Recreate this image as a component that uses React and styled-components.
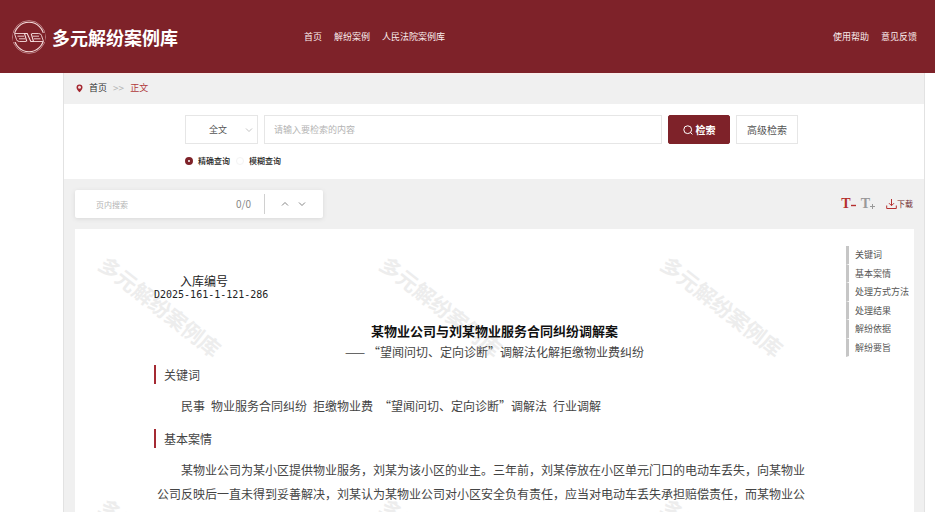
import React, { useState } from 'react';
import styled, { createGlobalStyle } from 'styled-components';

const GlobalStyle = createGlobalStyle`
  * {
    box-sizing: border-box;
  }

  body {
    margin: 0;
    background: #ffffff;
    color: #333333;
    font-family: "Noto Sans CJK SC", sans-serif;
    font-size: 9px;
  }

  button, input, select {
    font-family: inherit;
    margin: 0;
  }

  a {
    color: inherit;
    text-decoration: none;
  }
`;

const Page = styled.div`
  display: flex;
  flex-direction: column;
  min-height: 100vh;
`;

const Header = styled.header`
  display: flex;
  align-items: center;
  height: 73px;
  padding: 0 18px 0 12px;
  background: #7e2229;
  color: #ffffff;
`;

const Brand = styled.a`
  display: flex;
  align-items: center;
  gap: 6px;
  flex: 0 0 292px;
  font-size: 18px;
  font-weight: 700;
  line-height: 26px;
`;

const HeaderLinks = styled.nav`
  display: flex;
  gap: 12px;
  margin-left: ${(props) => (props.$end ? 'auto' : '0')};
  color: #fbeeee;
  font-size: 9px;
  line-height: 14px;
`;

const Shell = styled.main`
  display: flex;
  flex-direction: column;
  flex: 1;
  margin: 0 10px 0 63px;
  border: 1px solid #e2e2e2;
  border-width: 0 1px;
  background: #f0f0f0;
`;

const Breadcrumb = styled.nav`
  display: flex;
  align-items: center;
  gap: 6px;
  height: 31px;
  padding: 0 12px 3px;
  border-top: 2px solid #f8eeec;
  font-size: 9px;
  line-height: 14px;
`;

const Arrows = styled.span`
  color: #b5b5b5;
  font-size: 10px;
`;

const Current = styled.span`
  color: #b0393b;
`;

const SearchPanel = styled.form`
  height: 75px;
  padding: 11px 126px 0 121px;
  background: #ffffff;
`;

const SearchRow = styled.div`
  display: flex;
  gap: 6px;
  height: 29px;
`;

const SelectBox = styled.div`
  position: relative;
  flex: 0 0 73px;

  svg {
    position: absolute;
    top: 11px;
    right: 5px;
    pointer-events: none;
  }
`;

const Select = styled.select`
  width: 100%;
  height: 100%;
  padding: 0 0 0 23px;
  border: 1px solid #e6e6e6;
  border-radius: 0;
  background: #ffffff;
  color: #555555;
  font-size: 9px;
  appearance: none;
`;

const SearchInput = styled.input`
  flex: 1;
  min-width: 0;
  padding: 0 9px;
  border: 1px solid #e6e6e6;
  font-size: 9px;

  &::placeholder {
    color: #b4b4b4;
  }
`;

const SearchButton = styled.button`
  display: flex;
  align-items: center;
  justify-content: center;
  gap: 3px;
  width: 62px;
  padding: 0;
  border: 1px solid ${(props) => (props.$primary ? '#7e2229' : '#e6e6e6')};
  border-radius: ${(props) => (props.$primary ? '2px' : '0')};
  background: ${(props) => (props.$primary ? '#7e2229' : '#ffffff')};
  color: ${(props) => (props.$primary ? '#ffffff' : '#555555')};
  font-size: 10px;
  font-weight: ${(props) => (props.$primary ? 700 : 400)};
`;

const RadioRow = styled.div`
  display: flex;
  gap: 6px;
  margin-top: 10px;
`;

const RadioLabel = styled.label`
  display: flex;
  align-items: center;
  gap: 5px;
  color: #222222;
  font-size: 8px;
  font-weight: 500;
  line-height: 14px;
`;

const Radio = styled.input`
  width: 8px;
  height: 8px;
  border: 1px solid #f4f4f4;
  border-radius: 50%;
  background: #ffffff;
  appearance: none;

  &:checked {
    border: 3px solid #7e2229;
  }
`;

const Tools = styled.div`
  display: flex;
  align-items: center;
  justify-content: space-between;
  height: 50px;
  padding: 0 11px;
`;

const FindBox = styled.div`
  display: flex;
  align-items: center;
  width: 248px;
  height: 28px;
  padding: 0 17px 0 21px;
  border-radius: 2px;
  background: #ffffff;
  box-shadow: 0 1px 4px #d8d8d8;
`;

const FindInput = styled.input`
  flex: 1;
  min-width: 0;
  padding: 0;
  border: 0;
  font-size: 8px;

  &::placeholder {
    color: #b4b4b4;
  }
`;

const FindCount = styled.span`
  padding-right: 13px;
  color: #888888;
  font-size: 10px;
  line-height: 14px;
`;

const FindSteps = styled.div`
  display: flex;
  align-items: center;
  gap: 9px;
  height: 20px;
  padding-left: 16px;
  border-left: 1px solid #d0d0d0;
`;

const IconButton = styled.button`
  display: flex;
  align-items: center;
  padding: 0;
  border: 0;
  background: none;
  color: ${(props) => props.$color || '#888888'};
  font-size: 8px;
  line-height: 14px;
`;

const ToolGroup = styled.div`
  display: flex;
  align-items: center;
  gap: 5px;
`;

const Download = styled(IconButton)`
  margin-left: 6px;
`;

const SizeLetter = styled.span`
  font-family: "Liberation Serif", serif;
  font-size: 14px;
  font-weight: 700;
  line-height: 16px;
`;

const Paper = styled.div`
  position: relative;
  flex: 1;
  margin: 0 10px 0 11px;
  overflow: hidden;
  background: #ffffff;
`;

const Watermarks = styled.div`
  position: absolute;
  top: -44px;
  left: -55px;
  display: grid;
  grid-template-columns: repeat(3, 281px);
  grid-auto-rows: 242px;
  place-items: center;
  color: #ededed;
  font-size: 21px;
  font-weight: 700;
  white-space: nowrap;
  pointer-events: none;
  user-select: none;
`;

const Watermark = styled.span`
  transform: rotate(38deg);
`;

const Outline = styled.nav`
  position: absolute;
  top: 17px;
  right: 5px;
  display: grid;
  grid-template-rows: repeat(6, 1fr);
  width: 63px;
  height: 111px;
`;

const OutlineLink = styled.a`
  display: flex;
  align-items: center;
  padding-left: 6px;
  border-left: 3px solid #c6c6c6;
  border-bottom: 1px solid #ffffff;
  color: #555555;
  font-size: 9px;
  white-space: nowrap;
`;

const Article = styled.article`
  position: relative;
  padding: 45px 79px 5px;
  font-size: 12px;
`;

const CaseNumber = styled.div`
  color: #222222;
  line-height: 14px;
`;

const CaseNumberLabel = styled.div`
  padding-left: 26px;
`;

const CaseNumberValue = styled.div`
  font-family: "DejaVu Sans Mono", monospace;
  font-size: 10px;
`;

const Title = styled.h1`
  margin: 19px 0 0;
  color: #111111;
  font-size: 13px;
  font-weight: 700;
  line-height: 20px;
  text-align: center;
`;

const Subtitle = styled.p`
  margin: 0 0 2px;
  color: #444444;
  line-height: 22px;
  text-align: center;
`;

const SectionTitle = styled.h2`
  margin: 0 0 10px;
  padding-left: 8px;
  border-left: 2px solid #a52a33;
  color: #444444;
  font-size: 12px;
  font-weight: 400;
  line-height: 19px;
`;

const Paragraph = styled.p`
  max-width: 54em;
  margin: 0 3px 11px;
  color: #444444;
  line-height: 24px;
  text-indent: 2em;
`;

const Emblem = () => (
  <svg width="34" height="34" viewBox="0 0 34 34" fill="none" stroke="#f6dcdc">
    <circle cx="17" cy="17" r="16.4" strokeWidth="0.5" />
    <circle cx="17" cy="17" r="14.8" strokeWidth="1.1" />
    <path d="M1 13h32v9H1z" fill="#7e2229" stroke="none" />
    <path
      d="M12.500 13.500H2.500L4.500 19.500Q5 21.500 7.500 21.500H14M12 16.200H5.500M13 18.800H7M21.500 21.500h10L29.500 15.500Q29 13.500 26.500 13.500H20M22 18.800h6.500M21 16.200h6"
      strokeWidth="0.9"
    />
    <path d="M14.800 21.500L12.500 13.500h2.700l3.600 8h2.700L19.200 13.500" strokeWidth="1.100" />
  </svg>
);

const PinIcon = () => (
  <svg width="7" height="9" viewBox="0 0 7 9">
    <path d="M3.500 0.500a3 3 0 0 1 3 3c0 2-1.600 3.200-3 4.800C2.100 6.700.5 5.500.5 3.500a3 3 0 0 1 3-3z" fill="#a3262f" />
    <circle cx="3.500" cy="3.300" r="1.500" fill="#f3dede" />
  </svg>
);

const Chevron = ({ up, color }) => (
  <svg width="8" height="8" viewBox="0 0 8 8" fill="none" stroke={color || '#777777'} strokeWidth="0.9">
    <path d={up ? 'M1 5.500L4 2.500l3 3' : 'M1 2.500l3 3 3-3'} />
  </svg>
);

const SearchIcon = () => (
  <svg width="10" height="10" viewBox="0 0 10 10" fill="none" stroke="#ffffff" strokeWidth="1">
    <circle cx="4.700" cy="4.700" r="3.900" />
    <path d="M7.400 7.400L9.400 9.400" />
  </svg>
);

const DownloadIcon = () => (
  <svg width="11" height="11" viewBox="0 0 11 11" fill="none" stroke="#b5302f" strokeWidth="1">
    <path d="M5.500 0v6.500M3 4.200l2.500 2.500L8 4.200M0.700 6.500v3h9.600v-3" />
  </svg>
);

const SizeSign = ({ plus }) => (
  <svg width="5" height="12" viewBox="0 0 5 12" stroke="currentColor" strokeWidth={plus ? 1 : 1.4}>
    <path d={plus ? 'M0 8.500h5M2.500 6v5' : 'M0 7.500h5'} />
  </svg>
);

const outline = ['关键词', '基本案情', '处理方式方法', '处理结果', '解纷依据', '解纷要旨'];
const watermarks = [0, 1, 2, 3, 4, 5];

const App = () => {
  const [mode, setMode] = useState('exact');

  return (
    <>
      <GlobalStyle />
      <Page>
        <Header>
          <Brand href="#">
            <Emblem />
            多元解纷案例库
          </Brand>
          <HeaderLinks>
            <a href="#">首页</a>
            <a href="#">解纷案例</a>
            <a href="#">人民法院案例库</a>
          </HeaderLinks>
          <HeaderLinks $end>
            <a href="#">使用帮助</a>
            <a href="#">意见反馈</a>
          </HeaderLinks>
        </Header>

        <Shell>
          <Breadcrumb>
            <PinIcon />
            <a href="#">首页</a>
            <Arrows>&gt;&gt;</Arrows>
            <Current>正文</Current>
          </Breadcrumb>

          <SearchPanel onSubmit={(e) => e.preventDefault()}>
            <SearchRow>
              <SelectBox>
                <Select aria-label="检索范围">
                  <option>全文</option>
                </Select>
                <Chevron color="#bbbbbb" />
              </SelectBox>
              <SearchInput type="text" aria-label="检索内容" placeholder="请输入要检索的内容" />
              <SearchButton type="submit" $primary>
                <SearchIcon />
                检索
              </SearchButton>
              <SearchButton type="button">高级检索</SearchButton>
            </SearchRow>
            <RadioRow>
              <RadioLabel>
                <Radio type="radio" name="mode" checked={mode === 'exact'} onChange={() => setMode('exact')} />
                精确查询
              </RadioLabel>
              <RadioLabel>
                <Radio type="radio" name="mode" checked={mode === 'fuzzy'} onChange={() => setMode('fuzzy')} />
                模糊查询
              </RadioLabel>
            </RadioRow>
          </SearchPanel>

          <Tools>
            <FindBox>
              <FindInput type="text" aria-label="页内搜索" placeholder="页内搜索" />
              <FindCount>0/0</FindCount>
              <FindSteps>
                <IconButton type="button" aria-label="上一个"><Chevron up /></IconButton>
                <IconButton type="button" aria-label="下一个"><Chevron /></IconButton>
              </FindSteps>
            </FindBox>
            <ToolGroup>
              <IconButton type="button" $color="#b5302f">
                <SizeLetter>T</SizeLetter>
                <SizeSign />
              </IconButton>
              <IconButton type="button" $color="#999999">
                <SizeLetter>T</SizeLetter>
                <SizeSign plus />
              </IconButton>
              <Download type="button" $color="#6e2a2e">
                <DownloadIcon />
                下载
              </Download>
            </ToolGroup>
          </Tools>

          <Paper>
            <Watermarks aria-hidden="true">
              {watermarks.map((n) => (
                <Watermark key={n}>多元解纷案例库</Watermark>
              ))}
            </Watermarks>
            <Article>
              <CaseNumber>
                <CaseNumberLabel>入库编号</CaseNumberLabel>
                <CaseNumberValue>D2025-161-1-121-286</CaseNumberValue>
              </CaseNumber>
              <Title>某物业公司与刘某物业服务合同纠纷调解案</Title>
              <Subtitle>—— “望闻问切、定向诊断”调解法化解拒缴物业费纠纷</Subtitle>
              <SectionTitle>关键词</SectionTitle>
              <Paragraph>民事&ensp;物业服务合同纠纷&ensp;拒缴物业费&ensp;“望闻问切、定向诊断”调解法&ensp;行业调解</Paragraph>
              <SectionTitle>基本案情</SectionTitle>
              <Paragraph>
                某物业公司为某小区提供物业服务，刘某为该小区的业主。三年前，刘某停放在小区单元门口的电动车丢失，向某物业公司反映后一直未得到妥善解决，刘某认为某物业公司对小区安全负有责任，应当对电动车丢失承担赔偿责任，而某物业公
              </Paragraph>
            </Article>
            <Outline>
              {outline.map((name) => (
                <OutlineLink key={name} href="#">{name}</OutlineLink>
              ))}
            </Outline>
          </Paper>
        </Shell>
      </Page>
    </>
  );
};

export default App;
